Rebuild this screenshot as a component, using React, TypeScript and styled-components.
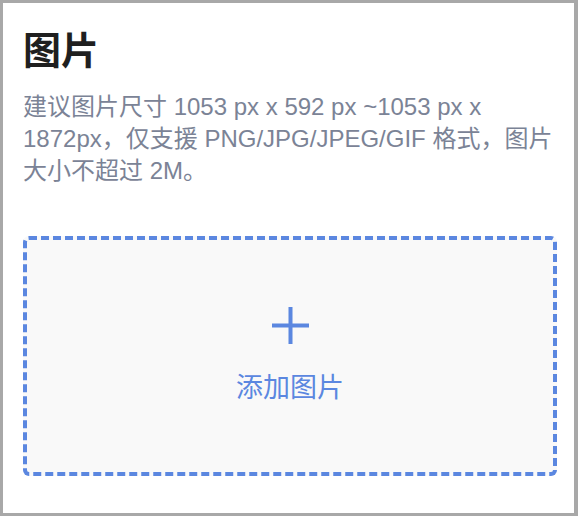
import React from 'react';
import styled, { createGlobalStyle } from 'styled-components';

const GlobalStyle = createGlobalStyle`
    html, body {
        margin: 0;
        padding: 0;
        background: #a8a8a8;
    }
    body {
        font-family: "Liberation Sans", "Noto Sans CJK SC", sans-serif;
    }
`

const Panel = styled.div`
    box-sizing: border-box;
    width: 571px;
    height: 510px;
    margin: 3px 4px 3px 3px;
    padding: 22px 17px 0 20px;
    background: #fff;
`

const Title = styled.h1`
    margin: 0;
    font-size: 38px;
    line-height: 52px;
    font-weight: 700;
    color: #1f1f1f;
`

const Hint = styled.p`
    margin: 14px 0 0;
    font-size: 24px;
    line-height: 32px;
    color: #7b8396;
`

const Dropzone = styled.button`
    box-sizing: border-box;
    display: flex;
    flex-direction: column;
    align-items: center;
    justify-content: center;
    width: 100%;
    height: 240px;
    margin-top: 49px;
    padding: 0;
    border: 4px dashed #5b87e0;
    border-radius: 6px;
    background: #f9f9f9;
    color: #5b87e0;
    font-family: inherit;
    cursor: pointer;
`

const PlusIcon = styled.svg`
    width: 37px;
    height: 37px;
`

const DropLabel = styled.span`
    margin-top: 26px;
    font-size: 27px;
    line-height: 36px;
`

const App: React.FC = () => {
    return (
        <React.Fragment>
            <GlobalStyle />
            <Panel>
                <Title>图片</Title>
                <Hint>
                    建议图片尺寸 1053 px x 592 px ~1053 px x 1872px，仅支援 PNG/JPG/JPEG/GIF 格式，图片大小不超过 2M。
                </Hint>
                <Dropzone type="button">
                    <PlusIcon viewBox="0 0 37 37">
                        <path d="M18.5 0v37M0 18.5h37" stroke="currentColor" strokeWidth="4" fill="none" />
                    </PlusIcon>
                    <DropLabel>添加图片</DropLabel>
                </Dropzone>
            </Panel>
        </React.Fragment>
    )
}

export default App
